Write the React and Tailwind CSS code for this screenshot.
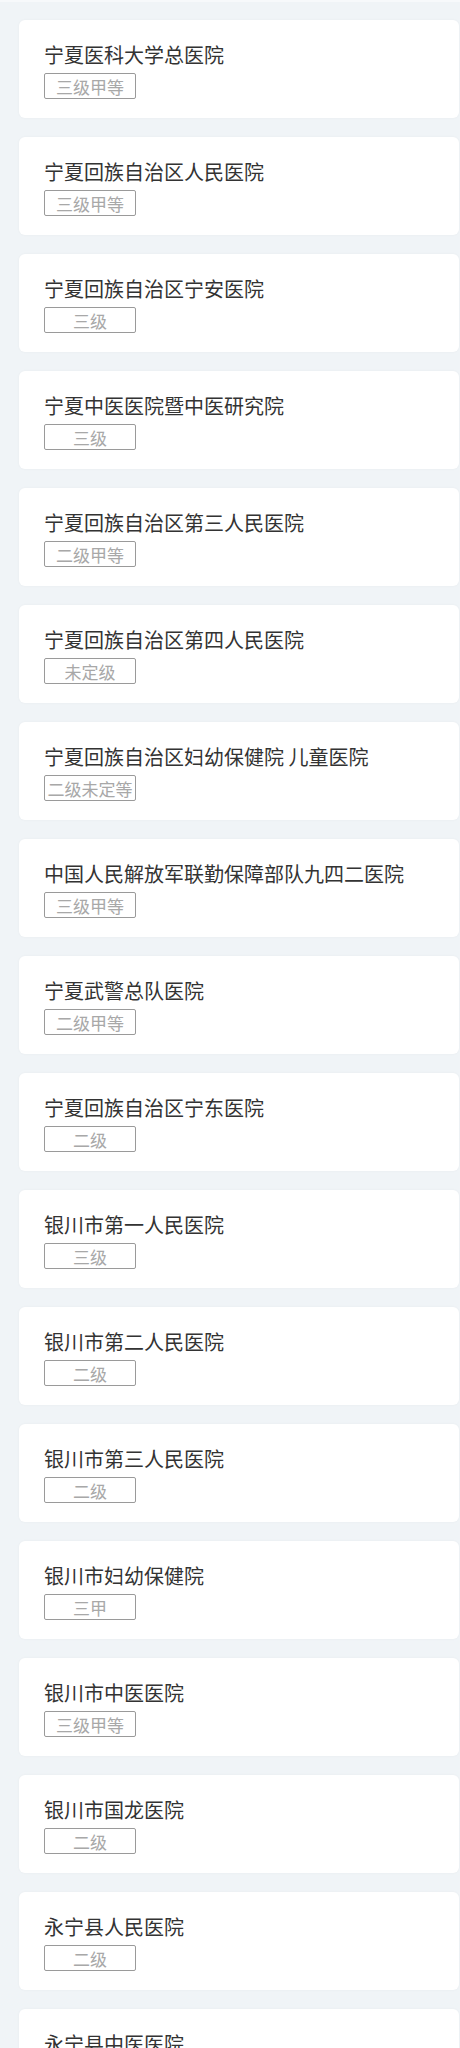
const hospitals = [
  { name: "宁夏医科大学总医院", level: "三级甲等" },
  { name: "宁夏回族自治区人民医院", level: "三级甲等" },
  { name: "宁夏回族自治区宁安医院", level: "三级" },
  { name: "宁夏中医医院暨中医研究院", level: "三级" },
  { name: "宁夏回族自治区第三人民医院", level: "二级甲等" },
  { name: "宁夏回族自治区第四人民医院", level: "未定级" },
  { name: "宁夏回族自治区妇幼保健院 儿童医院", level: "二级未定等" },
  { name: "中国人民解放军联勤保障部队九四二医院", level: "三级甲等" },
  { name: "宁夏武警总队医院", level: "二级甲等" },
  { name: "宁夏回族自治区宁东医院", level: "二级" },
  { name: "银川市第一人民医院", level: "三级" },
  { name: "银川市第二人民医院", level: "二级" },
  { name: "银川市第三人民医院", level: "二级" },
  { name: "银川市妇幼保健院", level: "三甲" },
  { name: "银川市中医医院", level: "三级甲等" },
  { name: "银川市国龙医院", level: "二级" },
  { name: "永宁县人民医院", level: "二级" },
  { name: "永宁县中医医院", level: "二级" },
];

const HospitalCard = ({ name, level }) => (
  <div className="rounded-md bg-white px-[25px] pt-[20px] pb-[19px] shadow-[0_0_3px_rgba(0,0,0,0.04)]">
    <div className="text-[20px] leading-[30px] text-[#333]">{name}</div>
    <div className="mt-[3px] flex h-[26px] w-[92px] items-center justify-center rounded-[2px] border border-[#9a9a9a] text-[17px] leading-none text-[#a8a8a8]">
      {level}
    </div>
  </div>
);

export default function App() {
  return (
    <div
      className="min-h-screen bg-[#f0f4f7]"
      style={{ fontFamily: '"Noto Sans CJK SC", "Noto Sans", sans-serif' }}
    >
      <div className="h-[2px] bg-[#f7f9fb]" />
      <div className="flex flex-col gap-[19px] pt-[18px] pl-[19px] pr-[1px]">
        {hospitals.map((h) => (
          <HospitalCard key={h.name} name={h.name} level={h.level} />
        ))}
      </div>
    </div>
  );
}
